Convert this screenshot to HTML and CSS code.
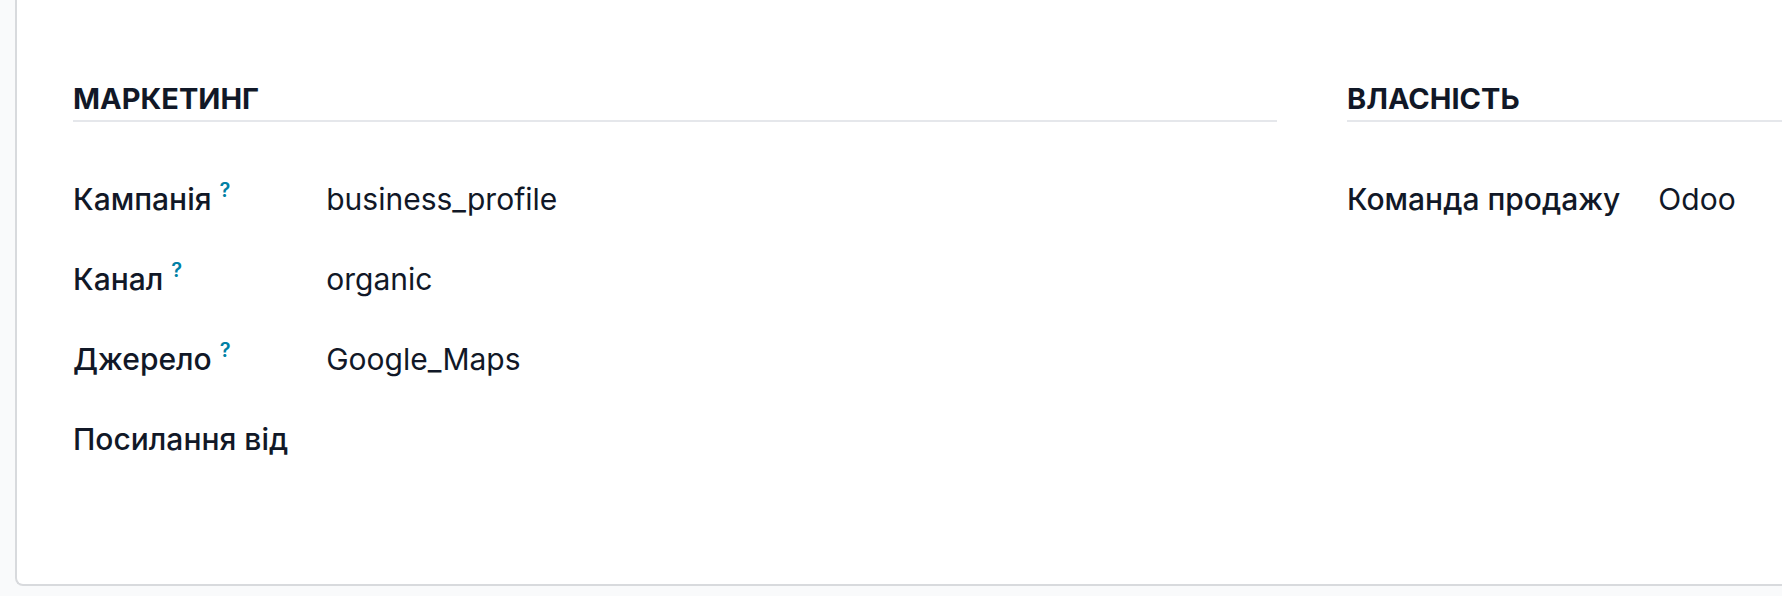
FILE: index.html
```html
<!DOCTYPE html>
<html lang="uk">
<head>
    <meta charset="UTF-8">
    <title>Маркетинг</title>
    <link rel="stylesheet" href="styles.css">
</head>
<body>
    <div class="sheet">
        <div class="group">
            <div class="group-title">Маркетинг</div>
            <div class="fields">
                <div class="field-label">Кампанія<sup class="help">?</sup></div>
                <div class="field-value">business_profile</div>

                <div class="field-label">Канал<sup class="help">?</sup></div>
                <div class="field-value">organic</div>

                <div class="field-label">Джерело<sup class="help">?</sup></div>
                <div class="field-value">Google_Maps</div>

                <div class="field-label">Посилання від</div>
                <div class="field-value"></div>
            </div>
        </div>

        <div class="group">
            <div class="group-title">Власність</div>
            <div class="fields">
                <div class="field-label">Команда продажу</div>
                <div class="field-value">Odoo</div>
            </div>
        </div>
    </div>
</body>
</html>
```

FILE: styles.css
```css
html, body {
    margin: 0;
    height: 596px;
    overflow: hidden;
}
body {
    font-family: Inter, "Noto Sans", Arial, sans-serif;
    background-color: #f9fafb;
    color: #111827;
}
.sheet {
    display: flex;
    gap: 70px;
    width: 2700px;
    height: 586px;
    box-sizing: border-box;
    margin-left: 15px;
    padding: 84px 56px 0 56px;
    background: #fff;
    border-left: 2px solid #d8dadd;
    border-bottom: 2px solid #d8dadd;
    border-bottom-left-radius: 8px;
}
.group {
    width: 1204px;
    flex: none;
}
.group-title {
    font-size: 29px;
    font-weight: 700;
    line-height: 30px;
    text-transform: uppercase;
    padding-bottom: 6px;
    border-bottom: 2px solid #e5e7eb;
}
.fields {
    display: grid;
    grid-template-columns: max-content 1fr;
    column-gap: 38px;
    row-gap: 40px;
    margin-top: 57px;
    font-size: 30px;
    line-height: 40px;
}
.field-label {
    font-weight: 500;
    white-space: nowrap;
}
.field-value {
    font-weight: 400;
}
.help {
    color: #0180a5;
    font-size: 20px;
    font-weight: 600;
    padding: 0 8px;
    vertical-align: 13px;
    line-height: 0;
}
```
